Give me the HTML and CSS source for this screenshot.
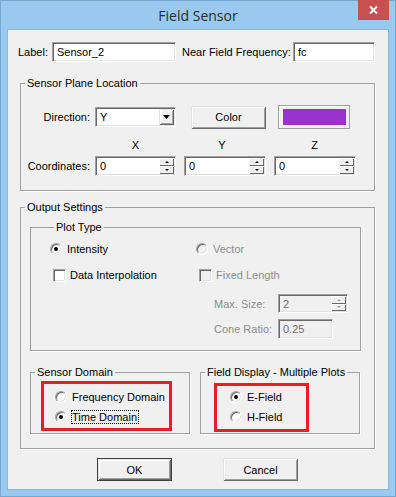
FILE: index.html
```html
<!DOCTYPE html>
<html>
<head>
<meta charset="utf-8">
<title>Field Sensor</title>
<link rel="stylesheet" href="styles.css">
</head>
<body>
<div class="window">
  <div class="titlebar">
    <span class="title">Field Sensor</span>
    <div class="close"><svg width="9" height="8" viewBox="0 0 9 8"><path d="M1 0.5 L8 7.5 M8 0.5 L1 7.5" stroke="#fff" stroke-width="2"/></svg></div>
  </div>
  <div class="client">
    <div class="row1">
      <span class="lbl-label">Label:</span>
      <input class="edit w-label" type="text" value="Sensor_2">
      <span class="lbl-nff">Near Field Frequency:</span>
      <input class="edit w-fc" type="text" value="fc">
    </div>

    <fieldset class="group g-plane">
      <legend>Sensor Plane Location</legend>
      <div class="plane-grid">
        <span class="rlabel">Direction:</span>
        <div class="combo"><span class="combo-text">Y</span><span class="dropbtn"><svg width="7" height="4" viewBox="0 0 7 4"><path d="M0 0H7L3.5 4Z" fill="#000"/></svg></span></div>
        <button class="btn btn-color">Color</button>
        <div class="swatch"><div class="swatch-fill"></div></div>

        <span></span>
        <span class="axis">X</span>
        <span class="axis axis-y">Y</span>
        <span class="axis">Z</span>

        <span class="rlabel">Coordinates:</span>
        <div class="spin w81"><input type="text" value="0"><div class="sbtns"><span class="sbtn up"></span><span class="sbtn down"></span></div></div>
        <div class="spin w82"><input type="text" value="0"><div class="sbtns"><span class="sbtn up"></span><span class="sbtn down"></span></div></div>
        <div class="spin w82"><input type="text" value="0"><div class="sbtns"><span class="sbtn up"></span><span class="sbtn down"></span></div></div>
      </div>
    </fieldset>

    <fieldset class="group g-out">
      <legend>Output Settings</legend>
      <fieldset class="group g-plot">
        <legend>Plot Type</legend>
        <div class="prow r1">
          <div class="pc1"><span class="radio checked"></span><span>Intensity</span></div>
          <div class="pc2 disabled"><span class="radio dis"></span><span>Vector</span></div>
        </div>
        <div class="prow r2">
          <div class="pc1"><span class="check"></span><span>Data Interpolation</span></div>
          <div class="pc2 disabled"><span class="check dis"></span><span>Fixed Length</span></div>
        </div>
        <div class="prow r3">
          <div class="pc1"></div>
          <div class="pc2 disabled fields">
            <span class="flabel">Max. Size:</span>
            <div class="spin spin-dis w70"><input type="text" value="2" disabled><div class="sbtns"><span class="sbtn up"></span><span class="sbtn down"></span></div></div>
          </div>
        </div>
        <div class="prow r4">
          <div class="pc1"></div>
          <div class="pc2 disabled fields">
            <span class="flabel">Cone Ratio:</span>
            <input class="edit edit-dis w55" type="text" value="0.25" disabled>
          </div>
        </div>
      </fieldset>

      <div class="bottom-row">
        <fieldset class="group g-small">
          <legend>Sensor Domain</legend>
          <div class="redbox rb1">
            <div class="opt"><span class="radio"></span><span>Frequency Domain</span></div>
            <div class="opt"><span class="radio checked"></span><span class="focus">Time Domain</span></div>
          </div>
        </fieldset>
        <fieldset class="group g-small">
          <legend>Field Display - Multiple Plots</legend>
          <div class="redbox rb2">
            <div class="opt"><span class="radio checked"></span><span>E-Field</span></div>
            <div class="opt"><span class="radio"></span><span>H-Field</span></div>
          </div>
        </fieldset>
      </div>
    </fieldset>

    <div class="btn-row">
      <button class="btn btn-dlg btn-default">OK</button>
      <button class="btn btn-dlg">Cancel</button>
    </div>
  </div>
</div>
</body>
</html>
```

FILE: styles.css
```css
* { box-sizing: border-box; }
html, body { margin: 0; padding: 0; }
body {
  width: 396px;
  height: 497px;
  overflow: hidden;
  font-family: "Liberation Sans", Arial, sans-serif;
  font-size: 11px;
  color: #000;
  background: #99c9ef;
}
.window {
  width: 396px;
  height: 497px;
  border: 1px solid #76a6d2;
  background: #99c9ef;
  display: flex;
  flex-direction: column;
}
.titlebar {
  position: relative;
  height: 28px;
  flex: none;
  display: flex;
  align-items: center;
  justify-content: center;
}
.title {
  font-family: "Open Sans", "Noto Sans", sans-serif;
  font-size: 14px;
  line-height: 16px;
  color: #2b2b2b;
  padding-top: 2px;
}
.close {
  position: absolute;
  top: -1px;
  right: 6px;
  width: 31px;
  height: 20px;
  background: #c75050;
  display: flex;
  align-items: center;
  justify-content: center;
}
.close svg { display: block; }
.client {
  flex: 1;
  margin: 0 6px 6px 6px;
  border: 1px solid #8cb6dd;
  background: #f0f0f0;
  padding: 12px 13px 0 12px;
  display: flex;
  flex-direction: column;
}

/* row 1 */
.row1 {
  display: flex;
  align-items: center;
  height: 20px;
  margin-left: -2px;
}
.lbl-label { width: 34px; }
.lbl-nff { width: 111px; margin-left: 6px; }

.edit {
  height: 20px;
  margin: 0;
  border: 1px solid;
  border-color: #a0a0a0 #fff #fff #a0a0a0;
  box-shadow: inset 1px 1px 0 #696969, inset -1px -1px 0 #e3e3e3;
  background: #fff;
  font: inherit;
  color: #000;
  padding: 0 0 0 4px;
  outline: none;
}
.w-label { width: 124px; }
.w-fc { width: 82px; }
.w55 { width: 55px; }
.edit-dis { background: #f0f0f0; color: #6d6d6d; }

/* group boxes */
.group {
  margin: 0;
  padding: 0;
  min-width: 0;
  border: 1px solid #a0a0a0;
  box-shadow: 1px 1px 0 #fff;
}
.group > legend {
  margin-left: 4px;
  padding: 0 2px;
  line-height: 13px;
  font-size: 11px;
}
.g-plane {
  margin-top: 15px;
  padding: 15px 0 14px 0;
}
.plane-grid {
  display: grid;
  grid-template-columns: 74px 89px 90px 82px;
  grid-template-rows: 24px 27px 20px;
  align-items: center;
}
.rlabel { text-align: right; padding-right: 5px; }
.axis {
  align-self: end;
  margin-bottom: 4px;
  width: 81px;
  text-align: center;
  line-height: 13px;
}
.axis-y { padding-right: 5px; }

.combo {
  width: 81px;
  height: 20px;
  display: flex;
  align-items: center;
  border: 1px solid;
  border-color: #a0a0a0 #fff #fff #a0a0a0;
  padding: 1px;
  box-shadow: inset 1px 1px 0 #696969, inset -1px -1px 0 #e3e3e3;
  background: #fff;
}
.combo-text { flex: 1; padding-left: 3px; }
.dropbtn {
  width: 15px;
  height: 16px;
  background: #f0f0f0;
  box-shadow: inset 1px 1px 0 #e3e3e3, inset -1px -1px 0 #696969, inset 2px 2px 0 #fff, inset -2px -2px 0 #a0a0a0;
  display: flex;
  align-items: center;
  justify-content: center;
}
.dropbtn svg { display: block; }

.btn {
  font: inherit;
  color: #000;
  background: #f0f0f0;
  border: 0;
  margin: 0;
  padding: 0;
  box-shadow: inset 1px 1px 0 #e3e3e3, inset -1px -1px 0 #696969, inset 2px 2px 0 #fff, inset -2px -2px 0 #a0a0a0;
}
.btn-color {
  width: 75px;
  height: 23px;
  margin-left: 7px;
}
.swatch {
  width: 72px;
  height: 24px;
  margin-left: 4px;
  border: 1px solid #a0a0a0;
  padding: 3px 3px 3px 4px;
  background: #f0f0f0;
  box-shadow: inset 1px 1px 0 #fff;
}
.swatch-fill { width: 100%; height: 100%; background: #9932cc; }

/* spin */
.spin {
  display: flex;
  height: 20px;
  border: 1px solid;
  border-color: #a0a0a0 #fff #fff #a0a0a0;
  padding: 1px;
  box-shadow: inset 1px 1px 0 #696969, inset -1px -1px 0 #e3e3e3;
  background: #fff;
}
.spin input {
  flex: 1;
  min-width: 0;
  height: 16px;
  border: 0;
  margin: 0;
  padding: 0 0 0 3px;
  font: inherit;
  color: #000;
  background: transparent;
  outline: none;
}
.w81 { width: 81px; }
.w82 { width: 82px; }
.w70 { width: 70px; height: 19px; }
.w70 .sbtn { height: 7.5px; }
.w70 input { height: 15px; }
.spin-dis { background: #f0f0f0; }
.spin-dis input { color: #6d6d6d; }
.sbtns { width: 15px; display: flex; flex-direction: column; }
.sbtn {
  height: 8px;
  background: #f0f0f0;
  box-shadow: inset 1px 1px 0 #fff, inset -1px -1px 0 #696969;
  display: flex;
  align-items: center;
  justify-content: center;
}
.sbtn::after {
  content: "";
  border-left: 2px solid transparent;
  border-right: 2px solid transparent;
}
.sbtn.up::after { border-bottom: 2px solid #000; }
.sbtn.down::after { border-top: 2px solid #000; }
.spin-dis .sbtn.up::after { border-bottom-color: #a0a0a0; }
.spin-dis .sbtn.down::after { border-top-color: #a0a0a0; }

/* output settings */
.g-out {
  margin-top: 10px;
  padding: 0 0 14px 0;
}
.g-plot {
  margin: 7px 0 0 9px;
  width: 331px;
  padding: 7px 0 11px 19px;
}
.prow { display: flex; align-items: center; }
.pc1 { width: 146px; display: flex; align-items: center; }
.pc2 { display: flex; align-items: center; }
.disabled { color: #8d8d8d; }
.fields { padding-left: 18px; }
.flabel { width: 64px; }
.r1 { height: 16px; }
.r2 { height: 16px; margin-top: 10px; }
.r3 { height: 19px; margin-top: 11px; }
.r4 { height: 20px; margin-top: 6px; }

.radio {
  flex: none;
  width: 12px;
  height: 12px;
  border-radius: 50%;
  border: 1px solid;
  border-color: #a0a0a0 #fff #fff #a0a0a0;
  box-shadow: inset 1px 1px 0 #696969, inset -1px -1px 0 #e3e3e3;
  background: #fff;
  margin-right: 5px;
  display: flex;
  align-items: center;
  justify-content: center;
}
.radio.checked::after {
  content: "";
  width: 4px;
  height: 4px;
  border-radius: 50%;
  background: #000;
}
.radio.dis { background: #f0f0f0; }
.check {
  flex: none;
  width: 13px;
  height: 13px;
  margin-left: 3px;
  margin-right: 4px;
  border: 1px solid;
  border-color: #a0a0a0 #fff #fff #a0a0a0;
  box-shadow: inset 1px 1px 0 #696969, inset -1px -1px 0 #e3e3e3;
  background: #fff;
}
.check.dis { background: #f0f0f0; }

.bottom-row {
  display: flex;
  gap: 10px;
  margin: 15px 0 0 9px;
}
.g-small { width: 160px; padding: 0 0 1px 0; }
.redbox {
  border: 3px solid #ed1c24;
  display: flex;
  flex-direction: column;
  gap: 4px;
}
.rb1 { width: 131px; height: 50px; margin: 2px 0 0 10px; padding: 5px 0 0 11px; }
.rb2 { width: 95px; height: 49px; margin: 4px 0 0 13px; padding: 3px 0 0 13px; }
.opt { display: flex; align-items: center; height: 16px; }
.focus {
  border: 1px dotted #000;
  line-height: 12px;
  padding: 0 1px 0 0;
  margin-left: -1px;
}

.btn-row {
  display: flex;
  justify-content: center;
  gap: 51px;
  margin-top: 9px;
}
.btn-dlg { width: 75px; height: 23px; }
.btn-default { border: 1px solid #404040; }
```
